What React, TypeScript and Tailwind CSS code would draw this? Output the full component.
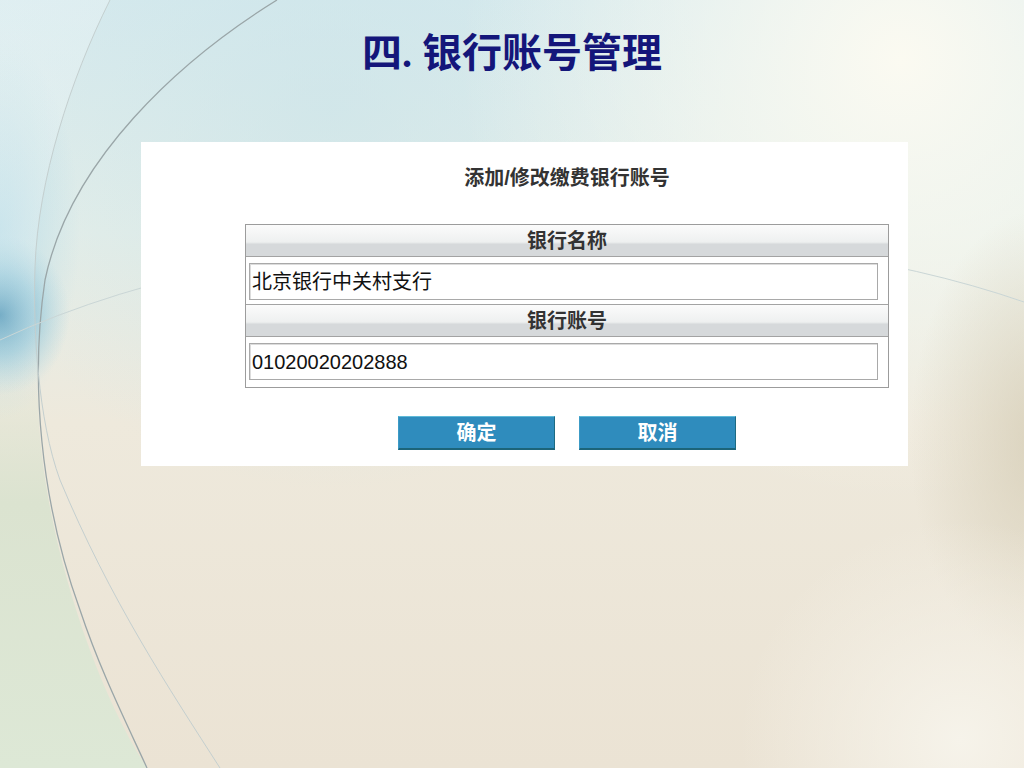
import React from "react";

function Background() {
  return (
    <svg
      className="absolute inset-0"
      width={1024}
      height={768}
      viewBox="0 0 1024 768"
    >
      <defs>
        <linearGradient id="base" x1="0" y1="0" x2="0" y2="1">
          <stop offset="0" stopColor="#d6eaee" />
          <stop offset="0.3" stopColor="#e4eee9" />
          <stop offset="0.55" stopColor="#eee9dc" />
          <stop offset="1" stopColor="#ebe3d4" />
        </linearGradient>
        <radialGradient id="cream" cx="900" cy="60" r="440" gradientUnits="userSpaceOnUse">
          <stop offset="0" stopColor="#fbfaf1" stopOpacity="1" />
          <stop offset="1" stopColor="#fbfaf1" stopOpacity="0" />
        </radialGradient>
        <radialGradient id="blue">
          <stop offset="0" stopColor="#5e9fbd" stopOpacity="0.95" />
          <stop offset="0.5" stopColor="#86c0d6" stopOpacity="0.6" />
          <stop offset="1" stopColor="#a8d4e2" stopOpacity="0" />
        </radialGradient>
        <radialGradient id="paleblue">
          <stop offset="0" stopColor="#b5dbe8" stopOpacity="0.8" />
          <stop offset="1" stopColor="#b5dbe8" stopOpacity="0" />
        </radialGradient>
        <radialGradient id="topblue" cx="330" cy="110" r="380" gradientUnits="userSpaceOnUse">
          <stop offset="0" stopColor="#cae3e8" stopOpacity="0.6" />
          <stop offset="1" stopColor="#cae3e8" stopOpacity="0" />
        </radialGradient>
        <linearGradient id="leftbottom" x1="0" y1="0" x2="0" y2="1">
          <stop offset="0" stopColor="#dbe3d0" stopOpacity="0" />
          <stop offset="0.35" stopColor="#dbe3d0" stopOpacity="1" />
          <stop offset="1" stopColor="#dde8d6" stopOpacity="1" />
        </linearGradient>
        <linearGradient id="lefttop" x1="0" y1="0" x2="0" y2="1">
          <stop offset="0" stopColor="#eef6f7" stopOpacity="0.4" />
          <stop offset="0.6" stopColor="#eef6f7" stopOpacity="0.25" />
          <stop offset="1" stopColor="#eef6f7" stopOpacity="0" />
        </linearGradient>
        <radialGradient id="rightedge">
          <stop offset="0" stopColor="#d8d0ba" stopOpacity="0.9" />
          <stop offset="1" stopColor="#d8d0ba" stopOpacity="0" />
        </radialGradient>
        <radialGradient id="bottomright" cx="960" cy="740" r="220" gradientUnits="userSpaceOnUse">
          <stop offset="0" stopColor="#f6f3ea" stopOpacity="1" />
          <stop offset="1" stopColor="#f6f3ea" stopOpacity="0" />
        </radialGradient>
      </defs>
      <rect x="0" y="0" width="1024" height="768" fill="url(#base)" />
      <rect x="0" y="0" width="1024" height="768" fill="url(#topblue)" />
      <rect x="0" y="0" width="1024" height="768" fill="url(#cream)" />
      <ellipse cx="1040" cy="440" rx="130" ry="230" fill="url(#rightedge)" />
      <rect x="0" y="0" width="1024" height="768" fill="url(#bottomright)" />
      <path
        d="M0 360 L37 360 C36 380 37 390 38 400 C40 520 90 680 147 768 L0 768 Z"
        fill="url(#leftbottom)"
      />
      <ellipse cx="0" cy="230" rx="80" ry="190" fill="url(#paleblue)" />
      <ellipse cx="0" cy="315" rx="70" ry="80" fill="url(#blue)" />
      <path
        d="M110 0 C70 80 38 180 35 267 C33 330 36 370 38 400 L0 400 L0 0 Z"
        fill="url(#lefttop)"
      />
      <path
        d="M277 0 C180 60 70 160 45 280 C30 380 40 500 80 610 C100 670 125 720 147 768"
        fill="none"
        stroke="#9aa6a8"
        strokeWidth="1.3"
      />
      <path
        d="M110 0 C70 80 38 180 35 267 C33 330 38 420 60 480 C110 600 170 690 220 768"
        fill="none"
        stroke="#c4cfcf"
        strokeWidth="1"
      />
      <path
        d="M0 340 C300 200 760 210 1024 302"
        fill="none"
        stroke="#cad6d6"
        strokeWidth="1"
      />
    </svg>
  );
}

function HeaderRow({ children }: { children: React.ReactNode }) {
  return (
    <div className="h-[32px] flex items-center justify-center border-b border-[#a3a3a3] bg-[linear-gradient(to_bottom,#fbfbfb_0%,#eef0f0_55%,#d6d9db_62%,#d6d9db_100%)] text-[20px] leading-[24px] font-bold text-[#333]">
      {children}
    </div>
  );
}

function InputRow({ value, last }: { value: string; last?: boolean }) {
  return (
    <div
      className={
        last
          ? "h-[50px] pl-[3px] pr-[10px] pt-[6px]"
          : "h-[48px] pl-[3px] pr-[10px] pt-[6px] border-b border-[#a3a3a3]"
      }
    >
      <div className="h-[37px] border border-[#a9a9a9] shadow-[inset_1px_1px_0_#dcdcdc] bg-white flex items-center pl-[2px] text-[20px] leading-[24px] text-[#111]">
        {value}
      </div>
    </div>
  );
}

export default function App() {
  return (
    <div
      className="relative w-[1024px] h-[768px] overflow-hidden"
      style={{ fontFamily: '"Liberation Sans", "Noto Sans CJK SC", sans-serif' }}
    >
      <Background />
      <div className="relative flex flex-col">
        <h1
          className="h-[142px] pt-[30px] text-center text-[40px] leading-[48px] font-bold text-[#14167a]"
          style={{ fontFamily: '"Liberation Serif", "Noto Sans CJK SC", serif' }}
        >
          四. 银行账号管理
        </h1>
        <div className="ml-[141px] w-[767px] bg-white pl-[104px] pr-[19px] pt-[24px] pb-[16px]">
          <div className="text-center text-[20px] leading-[24px] font-bold text-[#333]">
            添加/修改缴费银行账号
          </div>
          <div className="mt-[34px] border border-[#9c9c9c]">
            <HeaderRow>银行名称</HeaderRow>
            <InputRow value="北京银行中关村支行" />
            <HeaderRow>银行账号</HeaderRow>
            <InputRow value="01020020202888" last />
          </div>
          <div className="mt-[28px] flex justify-center gap-[24px]">
            <button className="w-[157px] h-[34px] bg-[#2f8cbd] border-t border-t-[#5fbad8] border-l border-l-[#3c9bc6] border-r border-r-[#1d6a82] border-b-2 border-b-[#1c6479] text-white text-[20px] leading-[24px] font-bold">
              确定
            </button>
            <button className="w-[157px] h-[34px] bg-[#2f8cbd] border-t border-t-[#5fbad8] border-l border-l-[#3c9bc6] border-r border-r-[#1d6a82] border-b-2 border-b-[#1c6479] text-white text-[20px] leading-[24px] font-bold">
              取消
            </button>
          </div>
        </div>
      </div>
    </div>
  );
}
